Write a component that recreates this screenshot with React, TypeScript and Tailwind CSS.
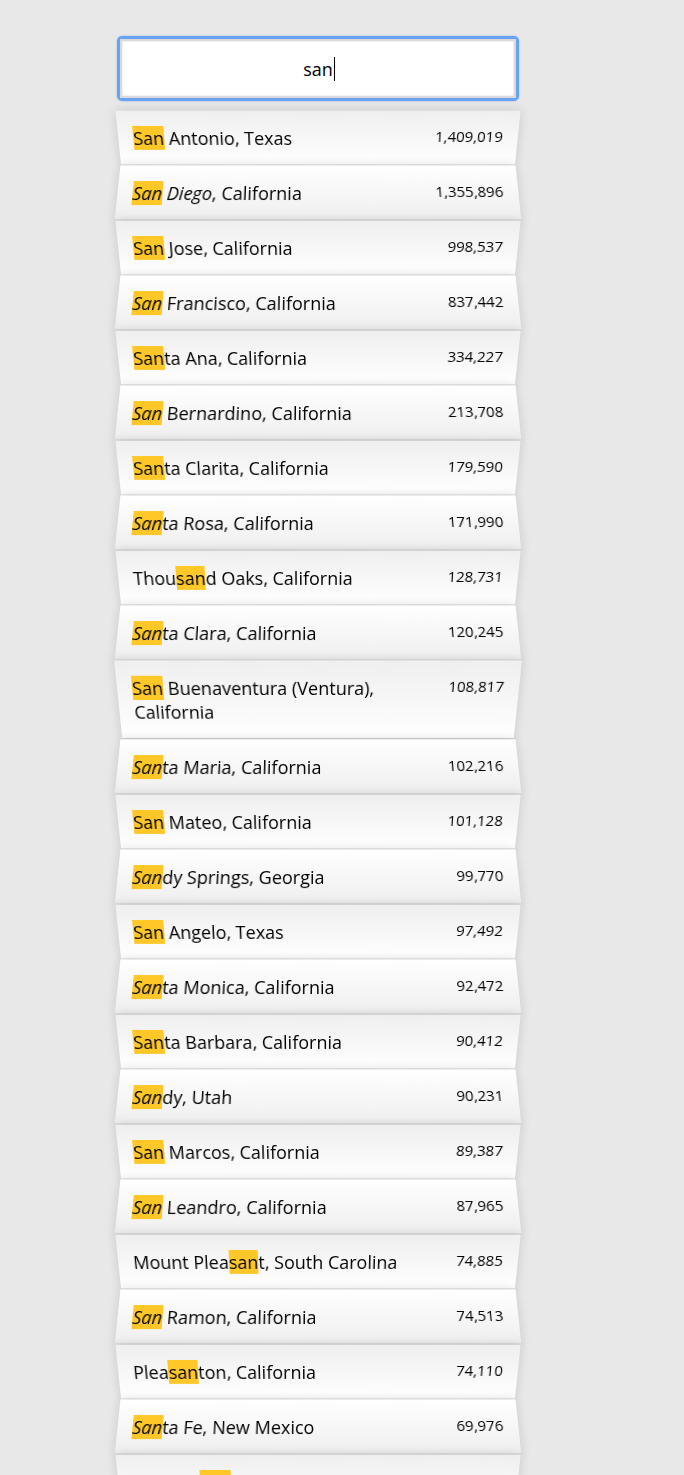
import React from "react";

type City = {
  name: string;
  population: string;
  italic?: string[];
};

const cities: City[] = [
  { name: "San Antonio, Texas", population: "1,409,019" },
  { name: "San Diego, California", population: "1,355,896", italic: ["Diego"] },
  { name: "San Jose, California", population: "998,537" },
  { name: "San Francisco, California", population: "837,442" },
  { name: "Santa Ana, California", population: "334,227" },
  { name: "San Bernardino, California", population: "213,708" },
  { name: "Santa Clarita, California", population: "179,590" },
  { name: "Santa Rosa, California", population: "171,990" },
  { name: "Thousand Oaks, California", population: "128,731" },
  { name: "Santa Clara, California", population: "120,245" },
  { name: "San Buenaventura (Ventura), California", population: "108,817" },
  { name: "Santa Maria, California", population: "102,216" },
  { name: "San Mateo, California", population: "101,128" },
  { name: "Sandy Springs, Georgia", population: "99,770" },
  { name: "San Angelo, Texas", population: "97,492" },
  { name: "Santa Monica, California", population: "92,472" },
  { name: "Santa Barbara, California", population: "90,412" },
  { name: "Sandy, Utah", population: "90,231" },
  { name: "San Marcos, California", population: "89,387" },
  { name: "San Leandro, California", population: "87,965" },
  { name: "Mount Pleasant, South Carolina", population: "74,885" },
  { name: "San Ramon, California", population: "74,513" },
  { name: "Pleasanton, California", population: "74,110" },
  { name: "Santa Fe, New Mexico", population: "69,976" },
  { name: "Rancho Santa Margarita, California", population: "48,550" },
];

const query = "san";

function Highlighted({ text, even, italic }: { text: string; even: boolean; italic?: string[] }) {
  const parts = text.split(new RegExp(`(${query})`, "gi"));
  return (
    <>
      {parts.map((part, i) => {
        if (part.toLowerCase() === query) {
          return (
            <span key={i} className={`bg-[#ffc828] ${even ? "italic" : ""}`}>
              {part}
            </span>
          );
        }
        if (italic && italic.length) {
          const sub = part.split(new RegExp(`(${italic.join("|")})`, "g"));
          return sub.map((s, j) =>
            italic.includes(s) ? (
              <em key={`${i}-${j}`}>{s}</em>
            ) : (
              <React.Fragment key={`${i}-${j}`}>{s}</React.Fragment>
            ),
          );
        }
        return <React.Fragment key={i}>{part}</React.Fragment>;
      })}
    </>
  );
}

function Suggestion({ city, index }: { city: City; index: number }) {
  const even = index % 2 === 1;
  return (
    <li
      className={`flex items-start justify-between border-b border-[#cfcfcf] px-[15px] shadow-[0_0_10px_rgba(0,0,0,0.14)] ${
        even
          ? "bg-linear-to-b from-white to-[#efefef] pt-[16px] pb-[14px] [transform:perspective(100px)_rotateX(3deg)_translateY(2px)_scale(1.001)]"
          : "bg-linear-to-t from-white to-[#efefef] py-[15px] [transform:perspective(100px)_rotateX(-3deg)_translateY(3px)]"
      }`}
    >
      <span className="min-w-0 flex-1 pr-3 text-[18px] leading-[24px] text-black">
        <Highlighted text={city.name} even={even} italic={city.italic} />
      </span>
      <span className="shrink-0 text-[15px] leading-[20px] text-black">
        {city.population}
      </span>
    </li>
  );
}

export default function App() {
  return (
    <div className="min-h-screen overflow-hidden bg-[#e8e8e8] pt-[36px] [font-family:'Open_Sans',sans-serif]">
      <div className="ml-[117px] w-[402px]">
        <div className="h-[65px] rounded-[5px] border-[3px] border-[#6aa2f2] shadow-[0_0_2px_rgba(90,150,240,0.6)]">
          <div className="flex h-full items-center justify-center border-2 border-[#dadada] bg-white shadow-[inset_0_0_2px_rgba(0,0,0,0.19)]">
            <span className="relative text-[18px] leading-[24px] text-black">
              san
              <span className="absolute -right-[2px] top-0 h-full w-px bg-black" />
            </span>
          </div>
        </div>
        <ul className="mx-px mt-[7px]">
          {cities.map((c, i) => (
            <Suggestion key={c.name} city={c} index={i} />
          ))}
        </ul>
      </div>
    </div>
  );
}
